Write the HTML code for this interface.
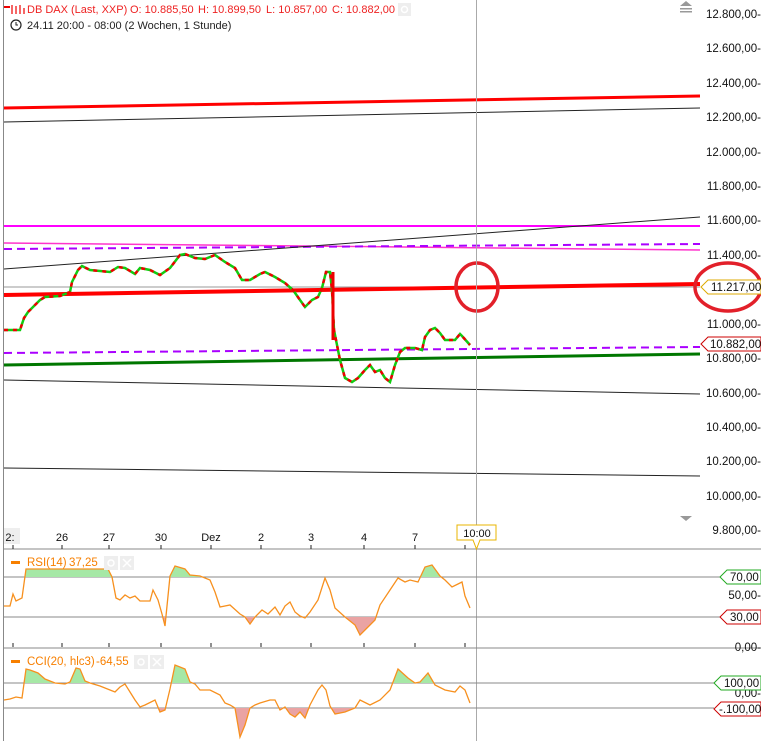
<!DOCTYPE html>
<html><head><meta charset="utf-8"><style>
html,body{margin:0;padding:0;background:#fff;width:761px;height:741px;overflow:hidden}
svg{display:block;font-family:"Liberation Sans",sans-serif}
</style></head><body>
<svg width="761" height="741" viewBox="0 0 761 741" xmlns="http://www.w3.org/2000/svg">
<defs>
<clipPath id="rAbove"><rect x="0" y="549" width="700" height="28"/></clipPath>
<clipPath id="rBelow"><rect x="0" y="617" width="700" height="31"/></clipPath>
<clipPath id="cAbove"><rect x="0" y="648" width="700" height="35"/></clipPath>
<clipPath id="cBelow"><rect x="0" y="708" width="700" height="33"/></clipPath>
</defs>
<rect width="761" height="741" fill="#fff"/>
<line x1="3.5" y1="0" x2="3.5" y2="741" stroke="#888" stroke-width="1"/>
<!-- header -->
<rect x="4" y="6" width="6" height="2" fill="#e00"/>
<g stroke="#e00" stroke-width="1.2"><line x1="12" y1="5" x2="12" y2="14"/><line x1="16" y1="6" x2="16" y2="14"/><line x1="20" y1="5" x2="20" y2="14"/><line x1="24" y1="8" x2="24" y2="14"/></g>
<g font-size="11" fill="#e22">
<text x="27" y="13">DB DAX (Last, XXP)</text>
<text x="130" y="13">O: 10.885,50</text>
<text x="198" y="13">H: 10.899,50</text>
<text x="266" y="13">L: 10.857,00</text>
<text x="332" y="13">C: 10.882,00</text>
</g>
<rect x="398" y="3" width="13" height="13" fill="#eee"/>
<circle cx="404.5" cy="9.5" r="3" fill="none" stroke="#fff" stroke-width="1.5"/>
<circle cx="16" cy="25" r="5" fill="none" stroke="#222" stroke-width="1.2"/>
<path d="M16 22v3h2" fill="none" stroke="#222" stroke-width="1"/>
<text x="27" y="29" font-size="11" fill="#222">24.11 20:00 - 08:00 (2 Wochen, 1 Stunde)</text>
<!-- lines -->
<line x1="4" y1="108" x2="700" y2="96" stroke="#f00" stroke-width="3"/>
<line x1="4" y1="122" x2="700" y2="108" stroke="#222" stroke-width="1"/>
<line x1="4" y1="226" x2="700" y2="226" stroke="#f0f" stroke-width="2"/>
<line x1="4" y1="243" x2="700" y2="250" stroke="#f3c" stroke-width="1.5"/>
<line x1="4" y1="249" x2="700" y2="244" stroke="#a0f" stroke-width="2" stroke-dasharray="8,5"/>
<line x1="4" y1="269" x2="700" y2="217" stroke="#222" stroke-width="1"/>
<line x1="4" y1="287" x2="700" y2="287" stroke="#999" stroke-width="1"/>
<line x1="4" y1="295" x2="700" y2="284" stroke="#f00" stroke-width="4"/>
<line x1="4" y1="353" x2="700" y2="347" stroke="#a0f" stroke-width="2" stroke-dasharray="8,5"/>
<line x1="4" y1="365" x2="700" y2="354" stroke="#070" stroke-width="3"/>
<line x1="4" y1="380" x2="700" y2="394" stroke="#222" stroke-width="1"/>
<line x1="4" y1="468" x2="700" y2="476" stroke="#222" stroke-width="1"/>
<!-- price path -->
<polyline fill="none" stroke="#1c1" stroke-width="2.5" points="4,330 20,330 24,318 28,312 35,305 40,300 45,297 60,296 70,292 72,282 78,270 82,266 90,270 110,272 118,267 125,268 135,274 140,268 150,270 160,275 170,268 180,255 185,254 195,258 205,259 215,255 225,262 235,268 242,280 250,280 260,274 265,272 275,277 285,283 293,290 300,300 305,307 312,300 318,297 322,288 326,272 330,272 332,290 334,330 336,340 340,360 345,378 352,382 358,378 365,370 370,365 375,372 380,370 385,378 390,382 395,365 400,352 405,348 415,348 422,350 425,337 430,330 435,328 440,333 445,340 455,340 460,334 462,336 470,345"/>
<polyline fill="none" stroke="#e00" stroke-width="2.5" stroke-dasharray="4,5" points="4,330 20,330 24,318 28,312 35,305 40,300 45,297 60,296 70,292 72,282 78,270 82,266 90,270 110,272 118,267 125,268 135,274 140,268 150,270 160,275 170,268 180,255 185,254 195,258 205,259 215,255 225,262 235,268 242,280 250,280 260,274 265,272 275,277 285,283 293,290 300,300 305,307 312,300 318,297 322,288 326,272 330,272 332,290 334,330 336,340 340,360 345,378 352,382 358,378 365,370 370,365 375,372 380,370 385,378 390,382 395,365 400,352 405,348 415,348 422,350 425,337 430,330 435,328 440,333 445,340 455,340 460,334 462,336 470,345"/>
<line x1="333" y1="272" x2="333" y2="340" stroke="#e00" stroke-width="3"/>
<!-- circles -->
<ellipse cx="477" cy="287" rx="21" ry="24" fill="none" stroke="#e2202a" stroke-width="3.5"/>
<ellipse cx="728" cy="287" rx="33" ry="24" fill="none" stroke="#e2202a" stroke-width="3.5"/>
<!-- cursor -->
<line x1="476.5" y1="0" x2="476.5" y2="741" stroke="#aaa" stroke-width="1"/>
<!-- price axis -->
<path d="M680 6l6 -5l6 5z M680 8h12v1.5h-12z M680 11h12v1.5h-12z" fill="#999"/>
<path d="M680 516l6 5l6 -5z" fill="#999"/>
<g font-size="11.5" fill="#111" text-anchor="end">
<text x="761" y="18">12.800,00-</text>
<text x="761" y="52">12.600,00-</text>
<text x="761" y="87">12.400,00-</text>
<text x="761" y="121">12.200,00-</text>
<text x="761" y="156">12.000,00-</text>
<text x="761" y="190">11.800,00-</text>
<text x="761" y="224">11.600,00-</text>
<text x="761" y="259">11.400,00-</text>
<text x="761" y="328">11.000,00-</text>
<text x="761" y="362">10.800,00-</text>
<text x="761" y="397">10.600,00-</text>
<text x="761" y="431">10.400,00-</text>
<text x="761" y="465">10.200,00-</text>
<text x="761" y="500">10.000,00-</text>
<text x="761" y="534">9.800,00-</text>
</g>
<path d="M701 287l7 -7h53v14h-53z" fill="#fff" stroke="#da0" stroke-width="1"/>
<text x="711" y="291" font-size="11.5" fill="#111">11.217,00</text>
<path d="M701 344l7 -7h53v14h-53z" fill="#fff" stroke="#c00" stroke-width="1"/>
<text x="710" y="348" font-size="11.5" fill="#111">10.882,00</text>
<!-- time axis -->
<line x1="4" y1="549" x2="761" y2="549" stroke="#888"/>
<rect x="4" y="528" width="16" height="16" fill="#eee"/>
<g font-size="11" fill="#111" text-anchor="middle">
<text x="10" y="541">2:</text><text x="62" y="541">26</text><text x="109" y="541">27</text><text x="161" y="541">30</text><text x="211" y="541">Dez</text><text x="261" y="541">2</text><text x="311" y="541">3</text><text x="364" y="541">4</text><text x="415" y="541">7</text>
</g>
<g stroke="#222"><line x1="13" y1="545" x2="13" y2="549"/><line x1="62" y1="545" x2="62" y2="549"/><line x1="109" y1="545" x2="109" y2="549"/><line x1="161" y1="545" x2="161" y2="549"/><line x1="211" y1="545" x2="211" y2="549"/><line x1="261" y1="545" x2="261" y2="549"/><line x1="311" y1="545" x2="311" y2="549"/><line x1="364" y1="545" x2="364" y2="549"/><line x1="415" y1="545" x2="415" y2="549"/><line x1="465" y1="545" x2="465" y2="549"/>
<line x1="13" y1="643" x2="13" y2="647"/><line x1="62" y1="643" x2="62" y2="647"/><line x1="109" y1="643" x2="109" y2="647"/><line x1="161" y1="643" x2="161" y2="647"/><line x1="211" y1="643" x2="211" y2="647"/><line x1="261" y1="643" x2="261" y2="647"/><line x1="311" y1="643" x2="311" y2="647"/><line x1="364" y1="643" x2="364" y2="647"/><line x1="415" y1="643" x2="415" y2="647"/><line x1="465" y1="643" x2="465" y2="647"/></g>
<path d="M457 525h39v15h-16l-3.5 9l-3.5 -9h-16z" fill="#fff" stroke="#e8b400" stroke-width="1"/>
<text x="477" y="537" font-size="11" fill="#111" text-anchor="middle">10:00</text>
<!-- RSI -->
<g stroke="#888" stroke-width="1"><line x1="4" y1="577" x2="720" y2="577"/><line x1="4" y1="617" x2="720" y2="617"/><line x1="4" y1="648" x2="761" y2="648"/><line x1="4" y1="683" x2="714" y2="683"/><line x1="4" y1="708" x2="714" y2="708"/></g>
<polygon clip-path="url(#rAbove)" fill="#a6e8a6" points="4,577 4,606 10,606 13,594 16,601 22,598 26,569 108,569 112,577 116,598 120,600 125,595 130,598 135,596 140,601 150,601 153,590 158,600 162,614 165,626 170,576 175,566 185,569 190,575 200,576 210,580 215,592 220,607 230,605 240,614 245,617 250,624 255,617 262,610 268,614 275,607 280,615 285,606 290,602 295,612 300,616 305,618 310,612 318,600 325,578 330,590 335,608 345,617 355,625 360,635 368,627 375,620 380,605 390,590 398,578 405,582 410,580 418,582 425,567 432,565 440,576 445,580 452,587 458,584 462,582 465,596 470,608 470,577"/>
<polygon clip-path="url(#rBelow)" fill="#eaa3a3" points="4,617 4,606 10,606 13,594 16,601 22,598 26,569 108,569 112,577 116,598 120,600 125,595 130,598 135,596 140,601 150,601 153,590 158,600 162,614 165,626 170,576 175,566 185,569 190,575 200,576 210,580 215,592 220,607 230,605 240,614 245,617 250,624 255,617 262,610 268,614 275,607 280,615 285,606 290,602 295,612 300,616 305,618 310,612 318,600 325,578 330,590 335,608 345,617 355,625 360,635 368,627 375,620 380,605 390,590 398,578 405,582 410,580 418,582 425,567 432,565 440,576 445,580 452,587 458,584 462,582 465,596 470,608 470,617"/>
<polyline fill="none" stroke="#f7901e" stroke-width="1.3" points="4,606 10,606 13,594 16,601 22,598 26,569 108,569 112,577 116,598 120,600 125,595 130,598 135,596 140,601 150,601 153,590 158,600 162,614 165,626 170,576 175,566 185,569 190,575 200,576 210,580 215,592 220,607 230,605 240,614 245,617 250,624 255,617 262,610 268,614 275,607 280,615 285,606 290,602 295,612 300,616 305,618 310,612 318,600 325,578 330,590 335,608 345,617 355,625 360,635 368,627 375,620 380,605 390,590 398,578 405,582 410,580 418,582 425,567 432,565 440,576 445,580 452,587 458,584 462,582 465,596 470,608"/>
<rect x="11" y="561" width="9" height="3" fill="#f77f00"/>
<text x="27" y="566" font-size="11.5" fill="#f77f00">RSI(14)</text>
<text x="69" y="566" font-size="11.5" fill="#f77f00">37,25</text>
<rect x="104" y="556" width="14" height="14" fill="#eee"/><rect x="120" y="556" width="14" height="14" fill="#eee"/>
<circle cx="111" cy="563" r="3" fill="none" stroke="#fff" stroke-width="1.5"/>
<path d="M123 559l8 8M131 559l-8 8" stroke="#fff" stroke-width="1.5"/>
<path d="M720 577l7 -7h34v14h-34z" fill="#fff" stroke="#2a2" stroke-width="1"/>
<text x="730" y="581" font-size="11.5" fill="#111">70,00</text>
<text x="761" y="599" font-size="11.5" fill="#111" text-anchor="end">50,00-</text>
<path d="M720 617l7 -7h34v14h-34z" fill="#fff" stroke="#c00" stroke-width="1"/>
<text x="730" y="621" font-size="11.5" fill="#111">30,00</text>
<text x="761" y="651" font-size="11.5" fill="#111" text-anchor="end">0,00-</text>
<!-- CCI -->
<polygon clip-path="url(#cAbove)" fill="#a6e8a6" points="4,683 4,700 10,699 16,697 22,698 26,669 30,670 38,673 45,679 55,683 65,684 70,682 76,668 80,669 85,681 90,683 100,686 110,690 115,692 120,687 125,684 130,692 135,700 140,707 145,705 155,700 160,712 165,710 170,689 175,665 185,669 190,682 195,684 200,690 210,690 220,695 225,703 230,705 235,708 240,737 245,725 250,708 255,705 260,703 270,700 275,700 280,710 285,707 290,714 295,717 300,712 305,718 310,705 318,690 322,685 326,690 330,706 335,714 345,712 355,708 360,700 370,705 380,700 390,690 398,669 408,678 415,683 420,682 428,673 435,685 445,690 455,692 460,686 465,690 470,703 470,683"/>
<polygon clip-path="url(#cBelow)" fill="#eaa3a3" points="4,708 4,700 10,699 16,697 22,698 26,669 30,670 38,673 45,679 55,683 65,684 70,682 76,668 80,669 85,681 90,683 100,686 110,690 115,692 120,687 125,684 130,692 135,700 140,707 145,705 155,700 160,712 165,710 170,689 175,665 185,669 190,682 195,684 200,690 210,690 220,695 225,703 230,705 235,708 240,737 245,725 250,708 255,705 260,703 270,700 275,700 280,710 285,707 290,714 295,717 300,712 305,718 310,705 318,690 322,685 326,690 330,706 335,714 345,712 355,708 360,700 370,705 380,700 390,690 398,669 408,678 415,683 420,682 428,673 435,685 445,690 455,692 460,686 465,690 470,703 470,708"/>
<polyline fill="none" stroke="#f7901e" stroke-width="1.3" points="4,700 10,699 16,697 22,698 26,669 30,670 38,673 45,679 55,683 65,684 70,682 76,668 80,669 85,681 90,683 100,686 110,690 115,692 120,687 125,684 130,692 135,700 140,707 145,705 155,700 160,712 165,710 170,689 175,665 185,669 190,682 195,684 200,690 210,690 220,695 225,703 230,705 235,708 240,737 245,725 250,708 255,705 260,703 270,700 275,700 280,710 285,707 290,714 295,717 300,712 305,718 310,705 318,690 322,685 326,690 330,706 335,714 345,712 355,708 360,700 370,705 380,700 390,690 398,669 408,678 415,683 420,682 428,673 435,685 445,690 455,692 460,686 465,690 470,703"/>
<rect x="11" y="660" width="9" height="3" fill="#f77f00"/>
<text x="27" y="665" font-size="11.5" fill="#f77f00">CCI(20, hlc3)</text>
<text x="96" y="665" font-size="11.5" fill="#f77f00">-64,55</text>
<rect x="134" y="655" width="14" height="14" fill="#eee"/><rect x="150" y="655" width="14" height="14" fill="#eee"/>
<circle cx="141" cy="662" r="3" fill="none" stroke="#fff" stroke-width="1.5"/>
<path d="M153 658l8 8M161 658l-8 8" stroke="#fff" stroke-width="1.5"/>
<text x="761" y="697" font-size="11.5" fill="#111" text-anchor="end">0,00-</text>
<path d="M714 683l7 -7h40v14h-40z" fill="#fff" stroke="#2a2" stroke-width="1"/>
<text x="724" y="687" font-size="11.5" fill="#111">100,00</text>
<path d="M714 709l7 -7h40v14h-40z" fill="#fff" stroke="#c00" stroke-width="1"/>
<text x="719" y="713" font-size="11.5" fill="#111">-.100,00</text>
</svg>
</body></html>
